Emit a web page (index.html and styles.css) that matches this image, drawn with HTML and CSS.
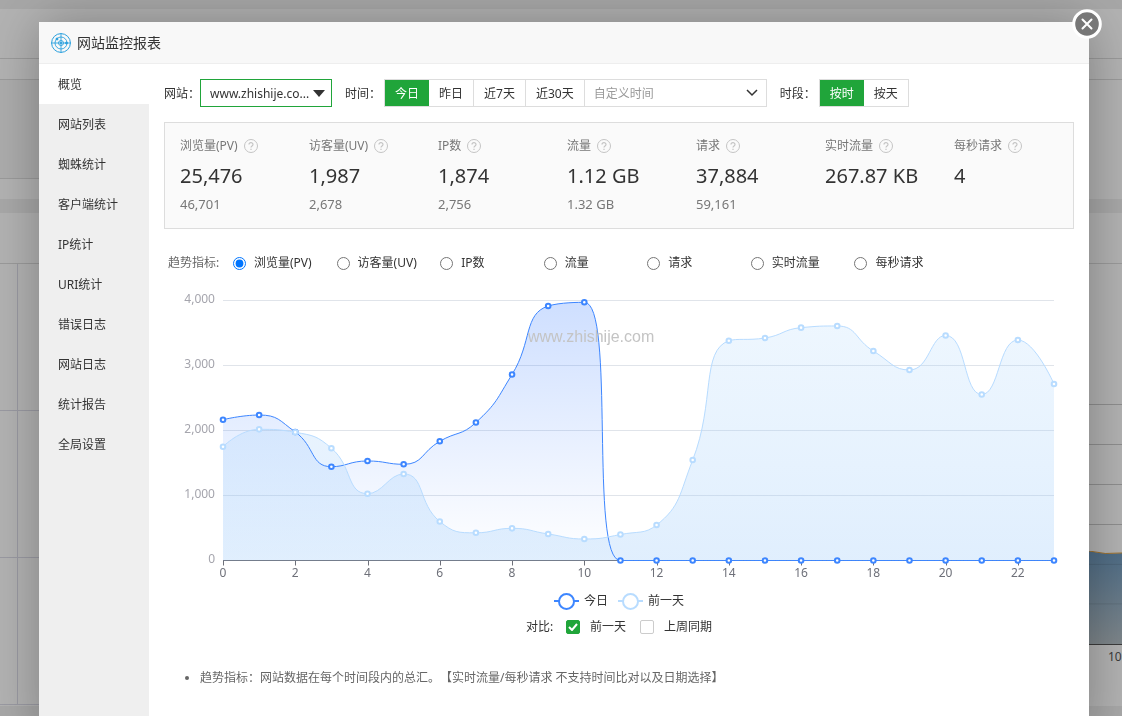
FILE: index.html
```html
<!DOCTYPE html>
<html lang="zh-CN">
  <head>
    <meta charset="UTF-8" />
    <meta name="viewport" content="width=device-width, initial-scale=1.0" />
    <title>网站监控报表</title>
    <link rel="stylesheet" href="styles.css">
  </head>
  <body>
    <!-- panel page behind the dialog -->
    <div class="page">
      <div class="panel status-panel">
        <div class="panel-title"></div>
        <div class="status-row"></div>
        <div class="status-body"></div>
      </div>
      <div class="panel-row">
        <div class="panel site-panel">
          <div class="panel-title"></div>
          <div class="site-grid"><span></span><span></span><span></span><span></span><span></span><span></span></div>
        </div>
        <div class="panel flow-panel">
          <div class="panel-title"></div>
          <div class="flow-chart">
            <svg class="flow-area" viewBox="0 0 33 94" preserveAspectRatio="none">
              <defs>
                <linearGradient id="flow-fill" x1="0" y1="0" x2="0" y2="1">
                  <stop offset="0" stop-color="#6f9bc0" />
                  <stop offset="1" stop-color="#b5c0c6" />
                </linearGradient>
              </defs>
              <path d="M0 0 Q16 4 33 2 V94 H0 Z" fill="url(#flow-fill)" />
              <path d="M0 0 Q16 4 33 2" fill="none" stroke="#e0a040" />
              <path d="M0 13.5h33M0 53.5h33" stroke="#000" stroke-opacity="0.1" />
            </svg>
          </div>
          <div class="flow-label">10</div>
        </div>
      </div>
    </div>
    <div class="shade"></div>

    <div class="dialog" role="dialog" aria-labelledby="dialog-title">
      <button type="button" class="close-btn" aria-label="关闭">
        <svg width="30" height="30" viewBox="0 0 30 30">
          <circle cx="15" cy="15" r="13.3" fill="#777" stroke="#fff" stroke-width="3" />
          <path d="M10.5 10.5l9 9M19.5 10.5l-9 9" stroke="#fff" stroke-width="2" stroke-linecap="round" />
        </svg>
      </button>
      <div class="dialog-header">
        <svg class="logo" width="20" height="20" viewBox="0 0 20 20" fill="none" stroke="#2aa0de">
          <circle cx="10" cy="10" r="9.4" />
          <circle cx="10" cy="10" r="6" stroke-width="0.9" />
          <circle cx="10" cy="10" r="2.5" stroke-width="0.9" />
          <path d="M10 0v20M0 10h20" stroke-width="0.9" />
          <circle cx="6" cy="6" r="1" fill="#2aa0de" />
          <circle cx="15.5" cy="10" r="1" fill="#2aa0de" />
          <circle cx="10" cy="10" r="0.6" fill="#2aa0de" />
        </svg>
        <h1 id="dialog-title">网站监控报表</h1>
      </div>

      <div class="dialog-body">
        <nav class="side-menu">
          <a href="#" class="active">概览</a>
          <a href="#">网站列表</a>
          <a href="#">蜘蛛统计</a>
          <a href="#">客户端统计</a>
          <a href="#">IP统计</a>
          <a href="#">URI统计</a>
          <a href="#">错误日志</a>
          <a href="#">网站日志</a>
          <a href="#">统计报告</a>
          <a href="#">全局设置</a>
        </nav>

        <main class="content">
          <div class="filters">
            <label class="filter-label" for="site">网站：</label>
            <select id="site" class="site-select">
              <option>www.zhishije.co...</option>
            </select>
            <span class="filter-label time-label">时间：</span>
            <div class="btn-group">
              <button type="button" class="active">今日</button>
              <button type="button">昨日</button>
              <button type="button">近7天</button>
              <button type="button">近30天</button>
              <select class="date-select" aria-label="自定义时间">
                <option>自定义时间</option>
              </select>
            </div>
            <span class="filter-label span-label">时段：</span>
            <div class="btn-group">
              <button type="button" class="active">按时</button>
              <button type="button">按天</button>
            </div>
          </div>

          <div class="stats" id="stats"></div>

          <div class="metrics" id="metrics">
            <span class="metrics-title">趋势指标:</span>
          </div>

          <div class="chart-box">
            <svg class="chart" id="chart" height="310"></svg>
            <span class="watermark">www.zhishije.com</span>
          </div>

          <div class="legend">
            <span class="legend-item today"><i></i>今日</span>
            <span class="legend-item previous"><i></i>前一天</span>
          </div>

          <div class="compare">
            <span class="compare-title">对比:</span>
            <label><input type="checkbox" checked />前一天</label>
            <label><input type="checkbox" />上周同期</label>
          </div>

          <ul class="notes">
            <li>趋势指标：网站数据在每个时间段内的总汇。【实时流量/每秒请求 不支持时间比对以及日期选择】</li>
          </ul>
        </main>
      </div>
    </div>

    <script src="script.js"></script>
  </body>
</html>
```
FILE: styles.css
```css
* {
  box-sizing: border-box;
}

body {
  margin: 0;
  height: 100vh;
  overflow: hidden;
  background: #f0f0f0;
  color: #333;
  font-family: "Noto Sans", "Noto Sans CJK SC", sans-serif;
  font-size: 12px;
  line-height: 20px;
  text-spacing-trim: space-all;
}

button, select, input {
  font: inherit;
  color: inherit;
}

/* page behind the dialog */
.page {
  padding-top: 9px;
}

.panel {
  background: #fff;
}

.panel-title {
  height: 50px;
  border-bottom: 1px solid #ddd;
}

.status-panel {
  height: 190px;
  margin-bottom: 14px;
}

.status-row {
  height: 21px;
  border-bottom: 1px solid #ddd;
}

.status-body {
  height: 99px;
  width: 50%;
  background: #f6f6f6;
  border-bottom: 1px solid #ddd;
}

.panel-row {
  display: grid;
  grid-template-columns: 1fr 1fr;
  gap: 15px;
}

.panel-row .panel {
  height: 493px;
}

.panel-row .panel-title {
  height: 51px;
}

.site-grid {
  display: grid;
  grid-template-columns: 18px 1fr;
  grid-auto-rows: 147px;
}

.site-grid span {
  border-right: 1px solid #dcdce8;
  border-bottom: 1px solid #dcdce8;
}

.flow-panel {
  display: flex;
  flex-direction: column;
}

.flow-chart {
  height: 381px;
  padding-top: 287px;
  border-bottom: 1px solid #555;
  background: repeating-linear-gradient(to top, transparent 0 39px, #ccc 39px 40px) bottom / 100% 241px no-repeat;
}

.flow-area {
  display: block;
  width: 33px;
  height: 93px;
  margin-left: auto;
}

.flow-label {
  align-self: flex-end;
  width: 14px;
  padding-top: 2px;
  color: #555;
}

.shade {
  position: fixed;
  inset: 0;
  background: rgba(0, 0, 0, 0.3);
}

/* dialog */
.dialog {
  position: fixed;
  top: 22px;
  right: 33px;
  bottom: -20px;
  left: 39px;
  display: flex;
  flex-direction: column;
  background: #fff;
  box-shadow: 1px 1px 50px rgba(0, 0, 0, 0.3);
}

.close-btn {
  position: absolute;
  top: -13px;
  right: -13px;
  width: 30px;
  height: 30px;
  padding: 0;
  border: none;
  background: none;
  cursor: pointer;
}

.close-btn svg {
  display: block;
}

.dialog-header {
  display: flex;
  align-items: center;
  gap: 6px;
  height: 42px;
  padding: 0 12px;
  background: #f8f8f8;
  border-bottom: 1px solid #eee;
}

.dialog-header h1 {
  margin: 0;
  font-size: 14px;
  font-weight: normal;
}

.dialog-body {
  display: flex;
  flex: 1;
}

.side-menu {
  flex: none;
  width: 110px;
  background: #efefef;
}

.side-menu a {
  display: block;
  height: 40px;
  padding-left: 19px;
  line-height: 42px;
  color: #333;
  text-decoration: none;
}

.side-menu a.active {
  background: #fff;
}

.content {
  flex: 1;
  min-width: 0;
  padding: 15px;
}

.filters {
  display: flex;
  align-items: center;
  height: 28px;
  margin-bottom: 15px;
}

.filter-label {
  padding-top: 2px;
  white-space: nowrap;
}

.site-select {
  appearance: none;
  width: 132px;
  height: 28px;
  padding: 2px 18px 0 9px;
  border: 1px solid #20a53a;
  border-radius: 0;
  background: url("data:image/svg+xml,%3Csvg xmlns='http://www.w3.org/2000/svg' width='12' height='7'%3E%3Cpath d='M0 0h12L6 7z' fill='%23333'/%3E%3C/svg%3E") right 6px center no-repeat;
}

.time-label, .span-label {
  margin-left: 13px;
}

.btn-group {
  display: flex;
  height: 28px;
  margin-left: 3px;
  border: 1px solid #ddd;
}

.btn-group button {
  padding: 2px 10px 0;
  border: none;
  border-right: 1px solid #ddd;
  background: #fff;
  white-space: nowrap;
  cursor: pointer;
}

.btn-group button:last-child {
  border-right: none;
}

.btn-group .active {
  border-right: none;
  background: #20a53a;
  color: #fff;
}

.date-select {
  appearance: none;
  width: 181px;
  padding: 2px 9px 0;
  border: none;
  border-radius: 0;
  background: url("data:image/svg+xml,%3Csvg xmlns='http://www.w3.org/2000/svg' width='12' height='8'%3E%3Cpath d='M1 1l5 5 5-5' fill='none' stroke='%23333' stroke-width='1.5'/%3E%3C/svg%3E") right 8px center no-repeat;
  color: #999;
}

.stats {
  display: grid;
  grid-template-columns: repeat(7, 1fr);
  height: 107px;
  padding: 13px 5px 0 0;
  border: 1px solid #ddd;
  background: #fafafa;
  color: #777;
}

.stat {
  padding-left: 15px;
  white-space: nowrap;
}

.stat-name {
  display: flex;
  align-items: center;
  gap: 6px;
}

.stat-value {
  height: 40px;
  line-height: 40px;
  font-size: 20px;
  color: #333;
}

.stat-last {
  line-height: 16px;
  font-size: 13px;
}

.metrics {
  display: grid;
  grid-template-columns: 65px repeat(7, 1fr);
  margin-top: 24px;
  padding: 0 116px 0 4px;
}

.metrics-title {
  color: #666;
}

.metrics label {
  display: flex;
  align-items: center;
  white-space: nowrap;
}

.metrics input {
  width: 13px;
  height: 13px;
  margin: 0 8px 0 0;
}

.chart-box {
  position: relative;
  height: 310px;
}

.chart {
  display: block;
  width: 100%;
}

.chart text {
  font-size: 12px;
  fill: #6e7079;
}

.chart .y-label {
  text-anchor: end;
  fill: #a5a5ad;
}

.chart .x-label {
  text-anchor: middle;
}

.watermark {
  position: absolute;
  top: 54px;
  left: 364px;
  color: #c4c4c4;
  font: 16px/20px "Liberation Sans", sans-serif;
}

.legend {
  display: flex;
  justify-content: center;
  gap: 10px;
  margin-top: 8px;
}

.legend-item {
  display: flex;
  align-items: center;
  gap: 5px;
}

.legend-item i {
  display: flex;
  align-items: center;
  justify-content: center;
  width: 25px;
  height: 2px;
  background: currentColor;
}

.legend-item i::after {
  content: "";
  flex: none;
  width: 13px;
  height: 13px;
  border: 2px solid;
  border-radius: 50%;
  background: #fff;
}

.today i {
  color: #3d86ff;
}

.previous i {
  color: #b8dcff;
}

.compare {
  display: flex;
  justify-content: center;
  margin-top: 6px;
}

.compare-title {
  margin-right: 13px;
}

.compare label {
  display: flex;
  align-items: center;
  margin-right: 14px;
}

.compare label:last-child {
  margin-right: 0;
}

.compare input {
  appearance: none;
  width: 14px;
  height: 14px;
  margin: 0 10px 0 0;
  border: 1px solid #ccc;
  border-radius: 2px;
}

.compare input:checked {
  border-color: #20a53a;
  background: #20a53a url("data:image/svg+xml,%3Csvg xmlns='http://www.w3.org/2000/svg' width='10' height='8'%3E%3Cpath d='M1 4l3 3 5-6' fill='none' stroke='%23fff' stroke-width='2'/%3E%3C/svg%3E") center no-repeat;
}

.notes {
  margin: 31px 0 0;
  padding-left: 36px;
  color: #666;
}
```
FILE: script.js
```js
const metrics = [
  { name: "浏览量(PV)", value: "25,476", last: "46,701" },
  { name: "访客量(UV)", value: "1,987", last: "2,678" },
  { name: "IP数", value: "1,874", last: "2,756" },
  { name: "流量", value: "1.12 GB", last: "1.32 GB" },
  { name: "请求", value: "37,884", last: "59,161" },
  { name: "实时流量", value: "267.87 KB", last: "" },
  { name: "每秒请求", value: "4", last: "" },
];

const today = [2166, 2238, 1977, 1443, 1531, 1480, 1834, 2123, 2862, 3915, 3972, 0, 0, 0, 0, 0, 0, 0, 0, 0, 0, 0, 0, 0];
const previous = [1751, 2018, 1972, 1728, 1028, 1331, 600, 426, 495, 408, 331, 400, 546, 1546, 3380, 3423, 3582, 3608, 3223, 2931, 3462, 2554, 3392, 2715];

const helpIcon = `
  <svg width="14" height="14" viewBox="0 0 14 14" fill="none" stroke="#c4c4c4">
    <circle cx="7" cy="7" r="6.5" />
    <path d="M5 5.6c0-2.6 4-2.6 4-.1 0 1.4-2 1.5-2 3M7 9.8v1.2" stroke-width="1.2" />
  </svg>`;

document.getElementById("stats").innerHTML = metrics.map((m) => `
  <div class="stat">
    <div class="stat-name">${m.name}${helpIcon}</div>
    <div class="stat-value">${m.value}</div>
    <div class="stat-last">${m.last}</div>
  </div>`).join("");

document.getElementById("metrics").insertAdjacentHTML("beforeend", metrics.map((m, i) => `
  <label><input type="radio" name="metric" ${i === 0 ? "checked" : ""} />${m.name}</label>`).join(""));

const chart = document.getElementById("chart");
const left = 59;
const right = 20;
const bottom = 287.5;
const unit = 0.065; // pixels per visit

const clamp = (v, a, b) => Math.min(Math.max(v, Math.min(a, b)), Math.max(a, b));

// smooth curve whose control points never pass the neighbouring points
function smoothPath(points) {
  let d = `M${points[0]}`;
  let [cx, cy] = points[0];
  for (let i = 1; i < points.length; i++) {
    const [px, py] = points[i - 1];
    const [x, y] = points[i];
    let c1x = x, c1y = y, nx = x, ny = y;
    if (i < points.length - 1) {
      const [qx, qy] = points[i + 1];
      const lenPrev = Math.hypot(x - px, y - py);
      const lenNext = Math.hypot(qx - x, qy - y);
      const ratio = lenNext / (lenNext + lenPrev);
      nx = clamp(x + (qx - px) * 0.5 * ratio, x, qx);
      ny = clamp(y + (qy - py) * 0.5 * ratio, y, qy);
      c1x = clamp(x - (nx - x) * lenPrev / lenNext, px, x);
      c1y = clamp(y - (ny - y) * lenPrev / lenNext, py, y);
      nx = x + (x - c1x) * lenNext / lenPrev;
      ny = y + (y - c1y) * lenNext / lenPrev;
    }
    d += `C${cx},${cy} ${c1x},${c1y} ${x},${y}`;
    cx = nx;
    cy = ny;
  }
  return d;
}

function renderChart() {
  const width = chart.clientWidth;
  const end = width - right;
  const step = (end - left) / (today.length - 1);
  let html = `
    <defs>
      <linearGradient id="fill-today" x1="0" y1="0" x2="0" y2="1">
        <stop offset="0" stop-color="#3d7fff" stop-opacity="0.25" />
        <stop offset="1" stop-color="#3d7fff" stop-opacity="0" />
      </linearGradient>
      <linearGradient id="fill-previous" x1="0" y1="0" x2="0" y2="1">
        <stop offset="0" stop-color="#a8d4fc" stop-opacity="0.2" />
        <stop offset="1" stop-color="#98c8fa" stop-opacity="0.3" />
      </linearGradient>
    </defs>`;

  for (let v = 0; v <= 4000; v += 1000) {
    const y = bottom - v * unit;
    html += `<path d="M${left} ${y}H${end}" stroke="${v ? "#e0e4ea" : "#6e7079"}" />`;
    html += `<text class="y-label" x="${left - 8}" y="${y + 2}">${v.toLocaleString("en-US")}</text>`;
  }
  for (let i = 0; i < today.length; i += 2) {
    const x = left + i * step;
    html += `<path d="M${Math.round(x) + 0.5} ${bottom}v5" stroke="#6e7079" />`;
    html += `<text class="x-label" x="${x}" y="${bottom + 16}">${i}</text>`;
  }

  const series = [
    { data: today, color: "#3d86ff", fill: "fill-today" },
    { data: previous, color: "#b8dcff", fill: "fill-previous" },
  ].map((s) => {
    const points = s.data.map((v, i) => [left + i * step, bottom - v * unit]);
    return { ...s, points, line: smoothPath(points) };
  });
  series.forEach((s) => {
    html += `<path d="${s.line}V${bottom}H${left}Z" fill="url(#${s.fill})" />`;
  });
  series.forEach((s) => {
    html += `<path d="${s.line}" fill="none" stroke="${s.color}" />`;
    s.points.forEach(([x, y]) => {
      html += `<circle cx="${x}" cy="${y}" r="2.3" fill="#fff" stroke="${s.color}" stroke-width="2" />`;
    });
  });
  chart.innerHTML = html;
}

window.addEventListener("resize", renderChart);
renderChart();
```
